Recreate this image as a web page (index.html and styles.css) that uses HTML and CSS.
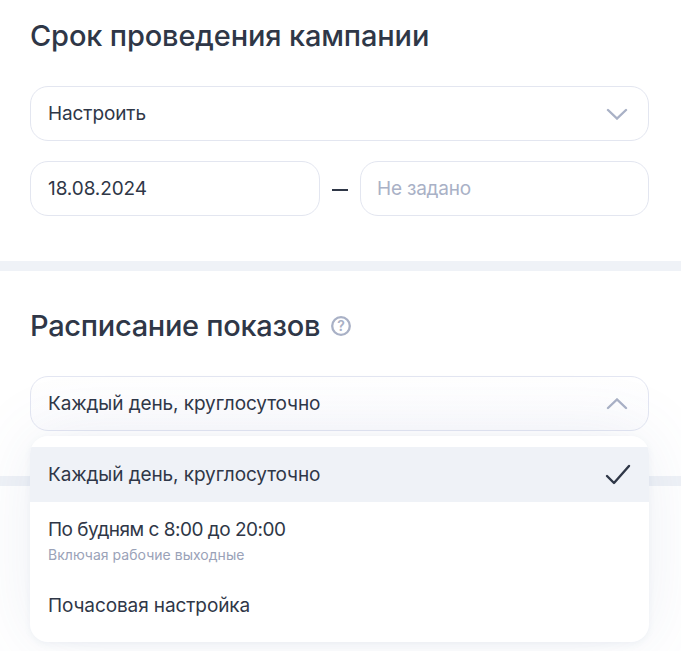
FILE: index.html
```html
<!DOCTYPE html>
<html lang="ru">
<head>
<meta charset="utf-8">
<title>Срок проведения кампании</title>
<link rel="stylesheet" href="styles.css">
</head>
<body>
<section class="section section-first">
  <h2 class="title">Срок проведения кампании</h2>
  <div class="field">
    <span>Настроить</span>
    <svg class="chev" width="22" height="12" viewBox="0 0 22 12"><path d="M2 2l9 8.500 9-8.500" fill="none" stroke="#a9b1c6" stroke-width="2.400" stroke-linecap="round"/></svg>
  </div>
  <div class="dates">
    <div class="field date">18.08.2024</div>
    <span class="dash"></span>
    <div class="field date placeholder">Не задано</div>
  </div>
</section>
<div class="divider"></div>
<section class="section section-second">
  <h2 class="title title-row">Расписание показов
    <svg class="help" width="20" height="20" viewBox="0 0 20 20"><circle cx="10" cy="10" r="8.800" fill="none" stroke="#a9b1c6" stroke-width="2.300"/><text x="10" y="14.500" text-anchor="middle" class="help-mark">?</text></svg>
  </h2>
  <div class="select-wrap">
    <div class="field open">
      <span>Каждый день, круглосуточно</span>
      <svg class="chev" width="22" height="12" viewBox="0 0 22 12"><path d="M2 10l9-8.500 9 8.500" fill="none" stroke="#a9b1c6" stroke-width="2.400" stroke-linecap="round"/></svg>
    </div>
    <div class="menu">
      <div class="item item-active">
        <span>Каждый день, круглосуточно</span>
        <svg width="26" height="22" viewBox="0 0 26 22"><path d="M2 12l7 7L24 2" fill="none" stroke="#2f3747" stroke-width="2.400" stroke-linecap="round" stroke-linejoin="round"/></svg>
      </div>
      <div class="item item-two">
        <span class="item-label-tight">По будням с 8:00 до 20:00</span>
        <small class="hint">Включая рабочие выходные</small>
      </div>
      <div class="item">Почасовая настройка</div>
    </div>
  </div>
</section>
<div class="divider"></div>
</body>
</html>
```

FILE: styles.css
```css
* { box-sizing: border-box; }
html, body { margin: 0; height: 651px; overflow: hidden; background: #fff; }
body { font-family: Inter, "Noto Sans", sans-serif; color: #2f3747; font-size: 19px; letter-spacing: -0.1px; }
.section { padding: 0 32px 0 30px; }
.section-first { height: 261px; padding-top: 15px; }
.section-second { height: 205px; padding-top: 34px; }
.title { margin: 0 0 30px; font-size: 29px; line-height: 41px; font-weight: 500; letter-spacing: -0.15px; }
.title-row { display: flex; align-items: center; gap: 11px; letter-spacing: -0.3px; }
.help { flex: none; }
.help-mark { font-size: 14px; font-weight: 600; fill: #a9b1c6; letter-spacing: 0; }
.divider { height: 10px; background: #eff2f7; }
.field {
  display: flex; align-items: center; justify-content: space-between;
  height: 55px; padding: 0 20px 0 17px;
  border: 1px solid #e3e6f0; border-radius: 18px; background: #fff;
  line-height: 24px; white-space: nowrap;
}
.dates { display: flex; align-items: center; margin-top: 20px; }
.date { flex: 1; }
.dash { width: 16px; height: 2px; margin: 2px 12px 0; background: #2f3747; }
.placeholder { color: #a9b1c6; letter-spacing: -0.2px; padding-left: 16px; }
.select-wrap { position: relative; }
.open { position: relative; z-index: 1; background: linear-gradient(#fff, #fcfcfe); border-color: #e3e6f2; }
.menu {
  position: absolute; left: 0; right: 0; top: 60px; z-index: 3;
  padding: 11px 0 0; height: 206px; background: #fff; border-radius: 18px;
  box-shadow: 0 0 70px rgba(92, 112, 160, 0.1), 0 2px 6px rgba(92, 112, 160, 0.07);
  overflow: hidden;
}
.item { display: flex; align-items: center; justify-content: space-between; height: 55px; padding: 0 18px; line-height: 24px; white-space: nowrap; }
.item-active { background: #eff2f7; }
.item-two { height: 76px; flex-direction: column; align-items: flex-start; justify-content: center; }
.item-label-tight { letter-spacing: -0.5px; }
.hint { margin-top: 5px; font-size: 14px; line-height: 16px; color: #9aa2b8; letter-spacing: 0.03px; }
```
